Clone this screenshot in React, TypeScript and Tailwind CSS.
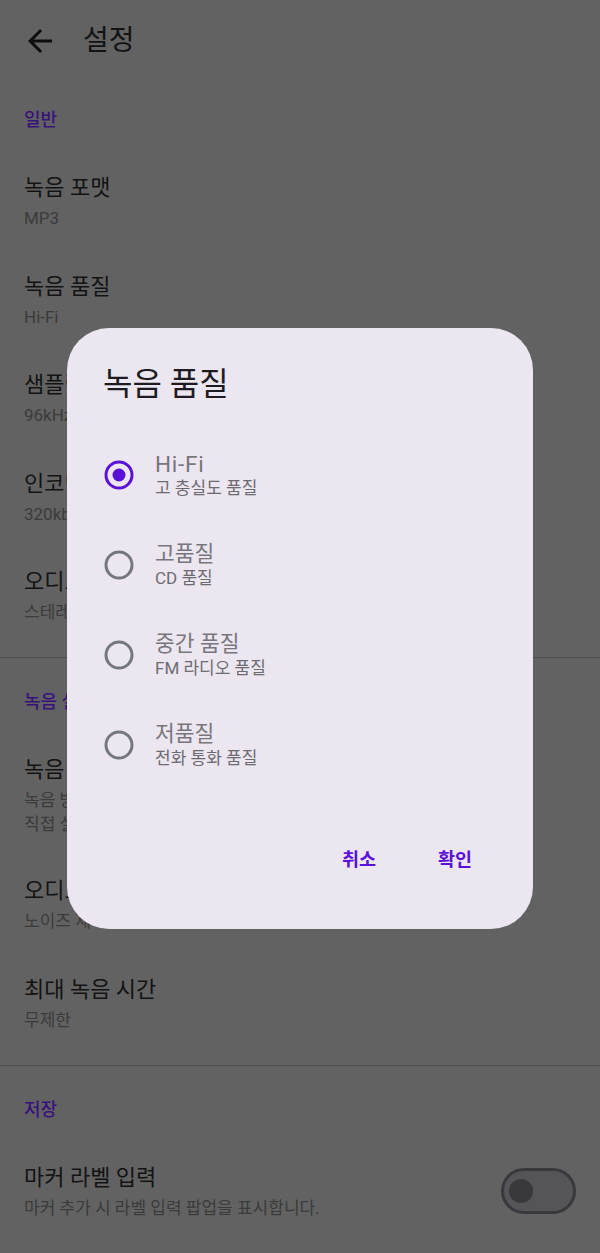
import React from "react";

const FONT = "font-['Roboto','Noto_Sans_CJK_KR',sans-serif]";

type ItemProps = {
  title: string;
  sub: string[];
  latin?: boolean;
  tight?: boolean;
  right?: React.ReactNode;
};

function Item({ title, sub, latin, tight, right }: ItemProps) {
  return (
    <div
      className={
        "flex items-center justify-between px-[24px] " +
        (tight ? "pt-[20.25px] pb-[18.75px]" : "py-[20.25px]")
      }
    >
      <div className="min-w-0">
        <div className="text-[22px] leading-[32px] text-[#131313] whitespace-nowrap">
          {title}
        </div>
        <div
          className={
            "mt-[2px] leading-[24px] text-[#3b3b3b] whitespace-nowrap " +
            (latin ? "text-[17px]" : "text-[17px]")
          }
        >
          {sub.map((s, i) => (
            <div key={i}>{s}</div>
          ))}
        </div>
      </div>
      {right}
    </div>
  );
}

function Section({ label, first }: { label: string; first?: boolean }) {
  return (
    <div
      className={
        "px-[24px] pb-[20px] text-[18px] font-medium leading-[24px] text-[#38127c] " +
        (first ? "pt-[26px]" : "pt-[32.5px]")
      }
    >
      {label}
    </div>
  );
}

function Radio({ checked }: { checked?: boolean }) {
  return (
    <svg width="30" height="30" viewBox="0 0 30 30">
      <circle
        cx="15"
        cy="15"
        r="13"
        fill="none"
        stroke={checked ? "#5b10d8" : "#75777e"}
        strokeWidth="3"
      />
      {checked && <circle cx="15" cy="15" r="6.5" fill="#5b10d8" />}
    </svg>
  );
}

const options = [
  { t: "Hi-Fi", s: "고 충실도 품질", latin: true, checked: true },
  { t: "고품질", s: "CD 품질" },
  { t: "중간 품질", s: "FM 라디오 품질" },
  { t: "저품질", s: "전화 통화 품질" },
];

export default function App() {
  return (
    <div className={"relative h-[1253px] w-[600px] overflow-hidden bg-[#626262] " + FONT}>
      {/* Top bar */}
      <div className="flex h-[82px] items-center pl-[22px]">
        <svg width="36" height="36" viewBox="0 0 24 24" fill="#0e0e0e">
          <path d="M20 11H7.83l5.59-5.59L12 4l-8 8 8 8 1.41-1.41L7.83 13H20v-2z" />
        </svg>
        <div className="ml-[25px] text-[28px] leading-[36px] text-[#131313]">
          설정
        </div>
      </div>

      <Section label="일반" first />
      <Item title="녹음 포맷" sub={["MP3"]} latin />
      <Item title="녹음 품질" sub={["Hi-Fi"]} latin />
      <Item title="샘플링 레이트" sub={["96kHz"]} latin />
      <Item title="인코딩 비트레이트" sub={["320kbps"]} latin />
      <Item title="오디오 채널" sub={["스테레오"]} />

      <div className="mt-[12px] h-px bg-[#505050]" />

      <Section label="녹음 설정" />
      <Item
        title="녹음 소스"
        sub={["녹음 방식을 선택합니다. 다른 소스는", "직접 설정해야 합니다."]}
        tight
      />
      <Item title="오디오 효과" sub={["노이즈 제거 및 자동 게인 제어 설정"]} />
      <Item title="최대 녹음 시간" sub={["무제한"]} />

      <div className="mt-[12.5px] h-px bg-[#505050]" />

      <Section label="저장" />
      <Item
        title="마커 라벨 입력"
        sub={["마커 추가 시 라벨 입력 팝업을 표시합니다."]}
        right={
          <div className="flex h-[46px] w-[75px] shrink-0 items-center rounded-full border-[3px] border-[#39383c] bg-[#555458]">
            <div className="ml-[5px] h-[24px] w-[24px] rounded-full bg-[#39383c]" />
          </div>
        }
      />

      {/* Dialog */}
      <div className="absolute left-[67px] top-[328px] w-[466px] rounded-[42px] bg-[#ece6f0] pt-[36px] pb-[45px]">
        <div className="pl-[36px] text-[32px] leading-[40px] text-[#1d1b20]">
          녹음 품질
        </div>
        <div className="mt-[26px]">
          {options.map((o) => (
            <div key={o.t} className="flex h-[90px] items-center pl-[28px]">
              <div className="flex h-[48px] w-[48px] items-center justify-center">
                <Radio checked={o.checked} />
              </div>
              <div className="ml-[12px]">
                <div
                  className={
                    "leading-[26px] text-[#77767c] " +
                    (o.latin ? "text-[22.5px] tracking-[0.75px]" : "text-[21.5px]")
                  }
                >
                  {o.t}
                </div>
                <div className="text-[17px] leading-[22px] text-[#6c6b71]">
                  {o.s}
                </div>
              </div>
            </div>
          ))}
        </div>
        <div className="mt-[46px] flex h-[48px] items-center justify-end gap-[26px] pr-[43px]">
          <div className="px-[18px] text-[18.5px] font-bold leading-[48px] text-[#5b10d8]">
            취소
          </div>
          <div className="px-[18px] text-[18.5px] font-bold leading-[48px] text-[#5b10d8]">
            확인
          </div>
        </div>
      </div>
    </div>
  );
}
